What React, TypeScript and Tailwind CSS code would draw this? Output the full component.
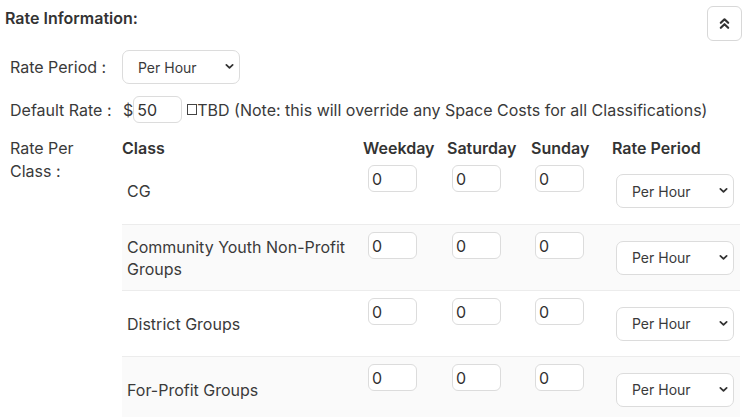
import { useState } from 'react';

const CLASSES = [
  'CG',
  'Community Youth Non-Profit Groups',
  'District Groups',
  'For-Profit Groups',
];

function Chevron() {
  return (
    <svg
      viewBox="0 0 10 6"
      className="pointer-events-none absolute right-[6px] top-1/2 h-[6px] w-[9px] -translate-y-[60%]"
      fill="none"
      stroke="#333"
      strokeWidth="2"
      strokeLinecap="round"
      strokeLinejoin="round"
    >
      <path d="M1.5 1.4 5 4.6 8.5 1.4" />
    </svg>
  );
}

function PeriodSelect() {
  const [value, setValue] = useState('hour');
  return (
    <div className="relative w-[118px]">
      <select
        value={value}
        onChange={(e) => setValue(e.target.value)}
        className="h-[34px] w-full appearance-none rounded-[7px] border border-[#dcdcdc] bg-white pl-[15px] text-[14px] text-[#3a3a3a] outline-none"
      >
        <option value="hour">Per Hour</option>
        <option value="day">Per Day</option>
        <option value="event">Per Event</option>
      </select>
      <Chevron />
    </div>
  );
}

function RateInput({ initial }: { initial: string }) {
  const [value, setValue] = useState(initial);
  return (
    <input
      value={value}
      onChange={(e) => setValue(e.target.value)}
      className="h-[27px] w-[49px] rounded-[6px] border border-[#dcdcdc] bg-white pl-[3px] text-[16px] text-[#333] outline-none"
    />
  );
}

export default function App() {
  return (
    <div className="h-[417px] w-[747px] overflow-hidden bg-white font-['Inter',sans-serif] text-[#3a3a3a]">
      <div className="flex items-start justify-between px-[5px] pt-[6px]">
        <div className="text-[16px] font-semibold text-[#333]">Rate Information:</div>
        <button className="flex h-[35px] w-[35px] items-center justify-center rounded-[6px] border border-[#d8d8d8] bg-white">
          <svg
            viewBox="0 0 12 14"
            className="h-[13px] w-[11px]"
            fill="none"
            stroke="#333"
            strokeWidth="2.4"
            strokeLinecap="round"
            strokeLinejoin="round"
          >
            <path d="M2 6.2 6 2.4 10 6.2" />
            <path d="M2 11.6 6 7.8 10 11.6" />
          </svg>
        </button>
      </div>

      <div className="mt-[9px] flex items-center pl-[10px]">
        <div className="w-[112px] text-[16px]">Rate Period :</div>
        <PeriodSelect />
      </div>

      <div className="mt-[12px] flex items-center pl-[10px] text-[16px]">
        <div className="w-[113px]">Default Rate :</div>
        <span>$</span>
        <RateInput initial="50" />
        <span className="ml-[5px] inline-block h-[11px] w-[10px] border border-[#444]" />
        <span>TBD (Note: this will override any Space Costs for all Classifications)</span>
      </div>

      <div className="mt-[13px] flex pl-[10px]">
        <div className="w-[112px] pt-[1px] text-[16px] leading-[23px]">
          Rate Per
          <br />
          Class :
        </div>
        <div className="w-[618px]">
          <div className="grid h-[22px] grid-cols-[241px_84px_84px_81px_128px] items-center pb-[2px] text-[16px] font-semibold text-[#333]">
            <div>Class</div>
            <div>Weekday</div>
            <div>Saturday</div>
            <div>Sunday</div>
            <div>Rate Period</div>
          </div>
          {CLASSES.map((name, i) => (
            <div
              key={name}
              className={`grid h-[66px] grid-cols-[241px_84px_84px_81px_128px] ${
                i > 0 ? 'border-t border-[#ececec]' : ''
              } ${i % 2 === 1 ? 'bg-[#fafafa]' : 'bg-white'}`}
            >
              <div className="self-center pl-[5px] pr-[10px] text-[16px] leading-[22px]">{name}</div>
              <div className="self-start pl-[5px] pt-[7px]">
                <RateInput initial="0" />
              </div>
              <div className="self-start pl-[5px] pt-[7px]">
                <RateInput initial="0" />
              </div>
              <div className="self-start pl-[4px] pt-[7px]">
                <RateInput initial="0" />
              </div>
              <div className="self-center pl-[4px]">
                <PeriodSelect />
              </div>
            </div>
          ))}
        </div>
      </div>
    </div>
  );
}
